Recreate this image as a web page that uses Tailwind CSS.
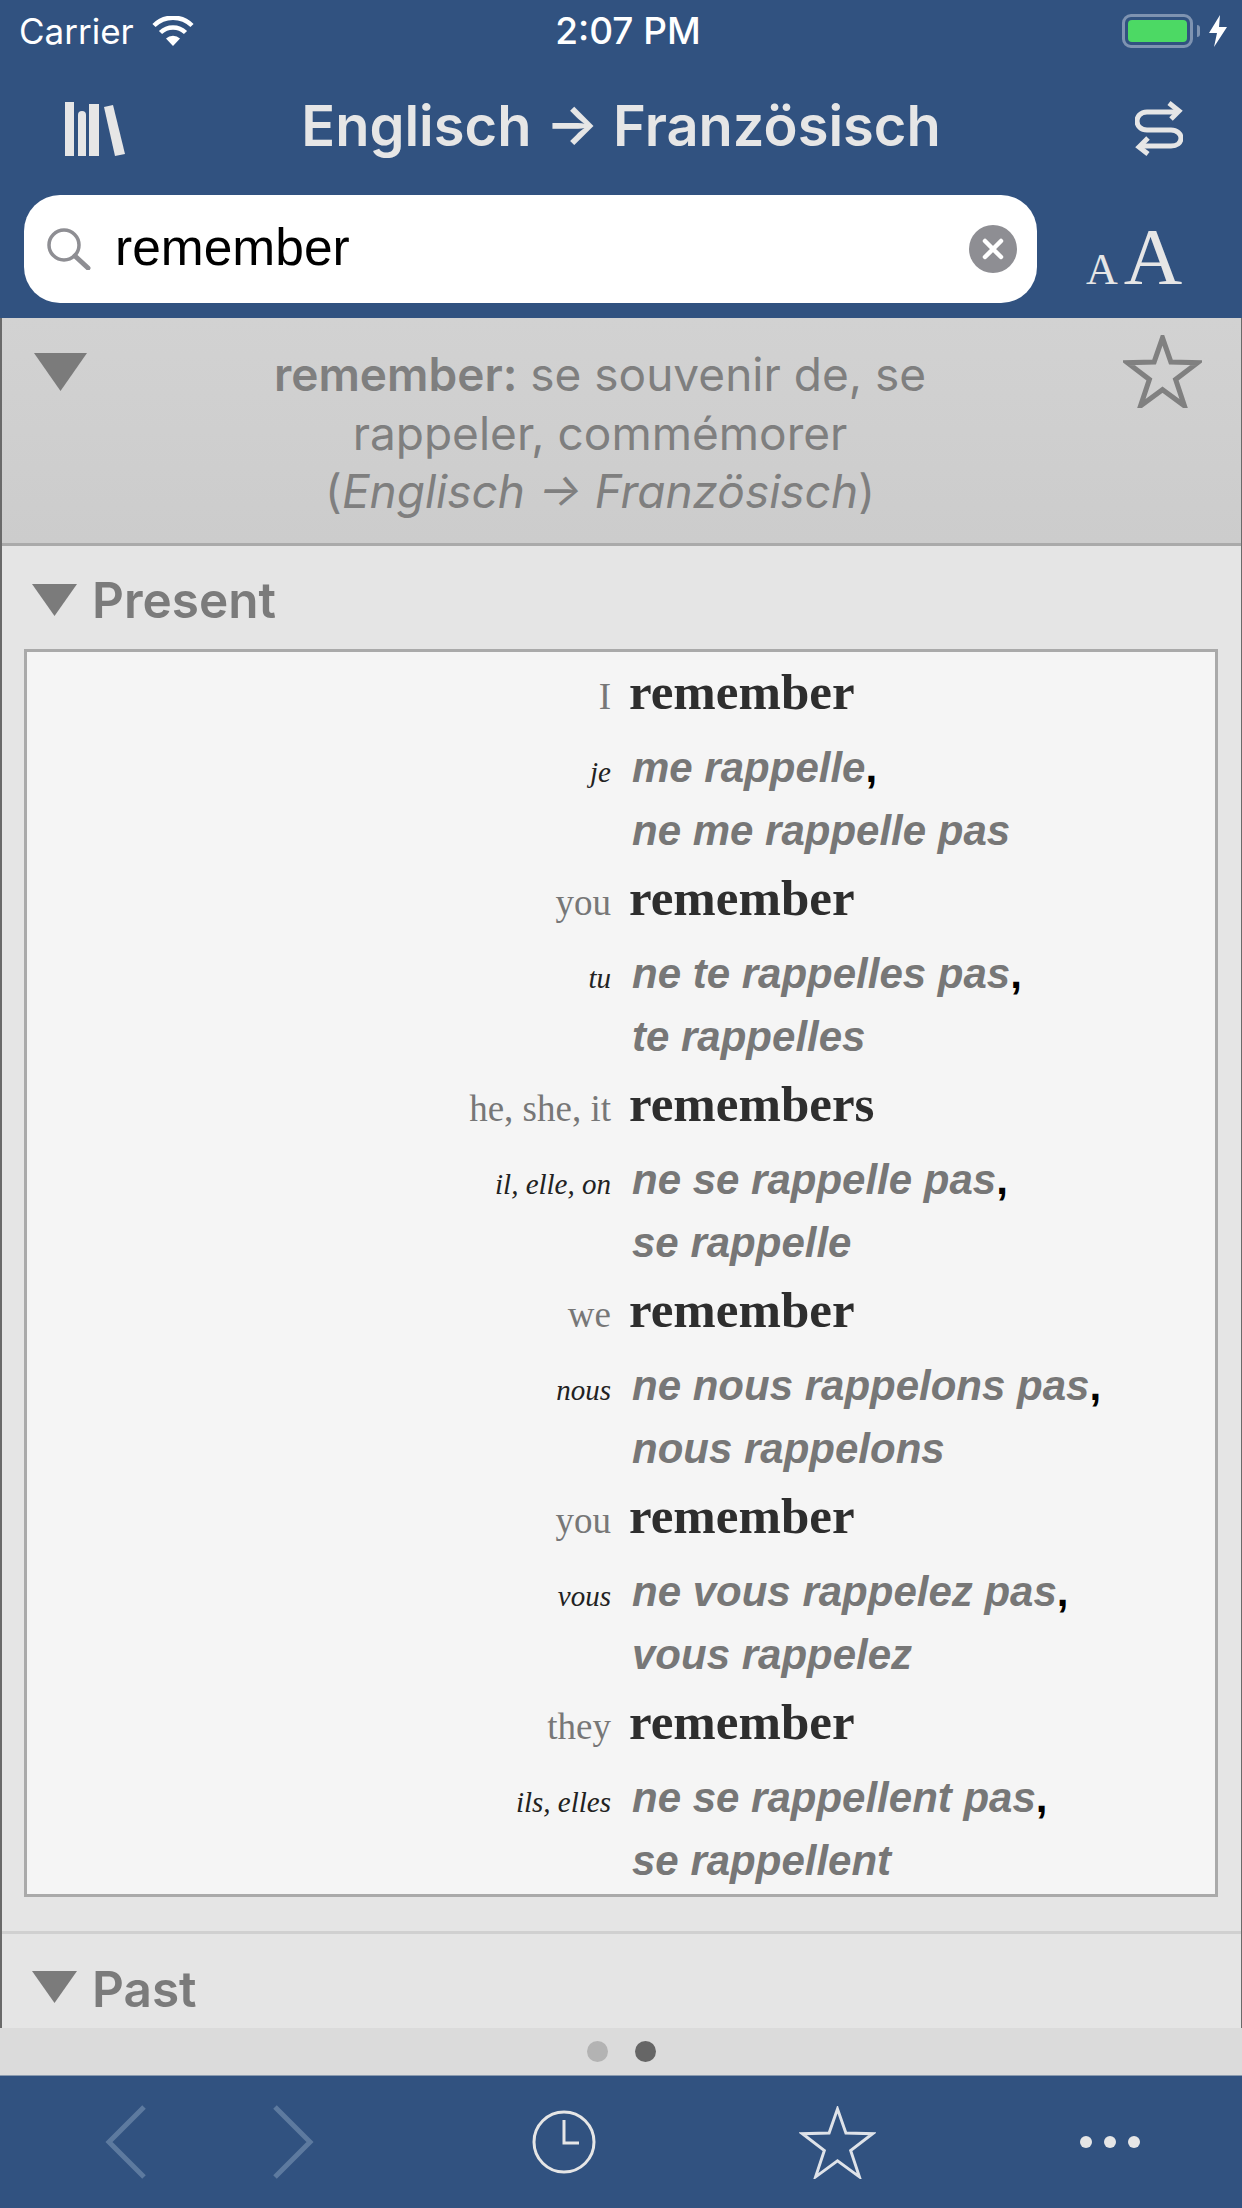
<!DOCTYPE html>
<html lang="en">
<head>
    <meta charset="UTF-8" />
    <title>Englisch - Französisch</title>
    <script src="https://cdn.jsdelivr.net/npm/@tailwindcss/browser@4"></script>
</head>
<body class="w-[1242px] h-[2208px] overflow-hidden flex flex-col bg-[#e5e5e5] font-['Inter',sans-serif]">

    <!-- Top bar -->
    <header class="h-[318px] flex-shrink-0 bg-[#315280] flex flex-col">
        <!-- Status bar -->
        <div class="h-[62px] grid grid-cols-[1fr_auto_1fr] items-center pl-[19px] pr-[15px] text-white text-[35px]">
            <div class="flex items-center gap-[18px]">
                <span>Carrier</span>
                <svg width="42" height="30" viewBox="0 0 42 30" fill="none" stroke="#fff" stroke-width="4.5"><path d="M21 30 L14 22.5 A10 10 0 0 1 28 22.5 Z" fill="#fff" stroke="none"/><path d="M8.5 16.5 A18 18 0 0 1 33.5 16.5"/><path d="M2 9.5 A27 27 0 0 1 40 9.5"/></svg>
            </div>
            <span class="font-medium text-[37px] ml-[10px]">2:07 PM</span>
            <div class="flex items-center justify-end">
                <div class="w-[71px] h-[34px] rounded-[9px] border-[3px] border-[#7e93b1] p-[3px]">
                    <div class="w-full h-full rounded-[4px] bg-[#4cd964]"></div>
                </div>
                <div class="w-[3px] h-[12px] ml-[4px] rounded-r-[3px] bg-[#7e93b1]"></div>
                <svg class="ml-[9px]" width="18" height="32" viewBox="0 0 18 32" fill="#fff"><polygon points="11,0 0,18 8,18 5,32 18,12 10,12"/></svg>
            </div>
        </div>

        <!-- Title row -->
        <div class="h-[133px] flex items-center text-[#e6e6e6]">
            <div class="w-[190px] pl-[65px]">
                <svg width="60" height="54" viewBox="0 0 60 54" fill="#e6e6e6"><rect x="0" y="0" width="9" height="54"/><path d="M13 13 a4 4 0 0 1 8 0 V54 H13 Z"/><rect x="24" y="2" width="10" height="52"/><polygon points="39,5 48,3 60,52 50,54"/></svg>
            </div>
            <h1 class="flex-grow text-center text-[56px] font-semibold whitespace-nowrap pb-[6px]">Englisch → Französisch</h1>
            <div class="w-[190px] pl-[83px]">
                <svg width="48" height="55" viewBox="0 0 48 55" fill="none" stroke="#e6e6e6" stroke-width="5"><path d="M43 11 H12 C5 11 2 16 2 20 C2 25 6 29 12 29 H36 C42 29 46 33 46 37 C46 42 42 45 36 45 H6"/><path d="M34 2 L44 10 L36 18"/><path d="M13 37 L4 46 L13 53"/></svg>
            </div>
        </div>

        <!-- Search row -->
        <div class="h-[108px] flex items-center pl-[24px]">
            <div class="w-[1013px] h-[108px] rounded-[36px] bg-white flex items-center pl-[23px] pr-[20px]">
                <svg width="44" height="42" viewBox="0 0 44 42" fill="none" stroke="#8e8e93" stroke-width="3.5"><circle cx="17" cy="17" r="15"/><path d="M28 28 L41 40" stroke-width="5" stroke-linecap="round"/></svg>
                <span class="ml-[24px] pb-[2px] flex-grow text-black text-[51.5px] font-['Liberation_Sans',sans-serif]">remember</span>
                <div class="w-[48px] h-[48px] rounded-full bg-[#8e8e93] flex items-center justify-center">
                    <svg width="24" height="24" viewBox="0 0 24 24" stroke="#fff" stroke-width="4.5" stroke-linecap="round"><path d="M4 4 L20 20 M20 4 L4 20"/></svg>
                </div>
            </div>
            <div class="ml-[49px] pt-[17px] flex items-baseline gap-[6px] text-[#e6e6e6] font-['Liberation_Serif',serif] leading-none">
                <span class="text-[44px]">A</span><span class="text-[81px]">A</span>
            </div>
        </div>
    </header>

    <main class="h-[1710px] flex-shrink-0 overflow-hidden border-l-2 border-r border-[#6a6a6a]">
        <!-- Entry header -->
        <section class="h-[228px] flex items-start border-b-[3px] border-[#aaaaaa] bg-gradient-to-b from-[#d2d2d2] to-[#cccccc] text-[#7f7f7f]">
            <div class="w-[85px] pl-[32px] pt-[35px] flex-shrink-0">
                <svg width="53" height="38" viewBox="0 0 53 38" fill="#7b7b7b"><polygon points="0,0 53,0 26.5,38"/></svg>
            </div>
            <p class="flex-grow text-center text-[46px] leading-[58.5px] pt-[27px] pr-[3px]">
                <b class="font-semibold">remember:</b> se souvenir de, se<br>rappeler, commémorer<br>(<i>Englisch → Französisch</i>)
            </p>
            <div class="w-[125px] pl-[7px] pt-[17px] flex-shrink-0">
                <svg width="79" height="73" viewBox="0 0 100 100" fill="none" stroke="#808080" stroke-width="7"><polygon points="50,4 61.5,37 98,38 68,61 80,97 50,75 20,97 32,61 2,38 38.5,37"/></svg>
            </div>
        </section>

        <!-- Present -->
        <section class="border-b-[3px] border-[#d0d0d0] pb-[34px]">
            <div class="h-[103px] flex items-center pl-[30px] pt-[4px] text-[#7b7b7b] text-[49.5px] font-semibold">
                <svg width="45" height="32" viewBox="0 0 45 32" fill="#7b7b7b"><polygon points="0,0 45,0 22.5,32"/></svg>
                <span class="ml-[15px] pt-[2px]">Present</span>
            </div>
            <div id="verb-table" class="mx-[22px] w-[1194px] h-[1248px] border-[3px] border-[#aaaaaa] bg-[#f5f5f5] pt-[5px]"></div>
        </section>

        <!-- Past -->
        <section class="h-[100px] pt-[36px] pl-[30px] flex items-start text-[#7b7b7b] text-[49.5px] font-semibold">
            <svg class="mt-[1px]" width="45" height="32" viewBox="0 0 45 32" fill="#7b7b7b"><polygon points="0,0 45,0 22.5,32"/></svg>
            <span class="ml-[15px] leading-[38px]">Past</span>
        </section>
    </main>

    <!-- Page dots -->
    <div class="h-[48px] flex-shrink-0 bg-[#dbdbdb] flex items-center justify-center gap-[27px] border-b border-[#8a9aae]">
        <span class="w-[21px] h-[21px] rounded-full bg-[#b3b3b3]"></span>
        <span class="w-[21px] h-[21px] rounded-full bg-[#666666]"></span>
    </div>

    <!-- Bottom toolbar -->
    <footer class="h-[132px] flex-shrink-0 bg-[#315280] flex items-center pl-[103px]">
        <svg width="44" height="74" viewBox="0 0 44 74" fill="none" stroke="#5d7a9f" stroke-width="5"><path d="M41 2 L6 37 L41 72"/></svg>
        <svg class="ml-[125px]" width="44" height="74" viewBox="0 0 44 74" fill="none" stroke="#5d7a9f" stroke-width="5"><path d="M3 2 L38 37 L3 72"/></svg>
        <svg class="ml-[216px]" width="64" height="64" viewBox="0 0 64 64" fill="none" stroke="#e6e6e6" stroke-width="3"><circle cx="32" cy="32" r="30"/><path d="M32 10 V33 H47"/></svg>
        <svg class="ml-[203px]" width="77" height="73" viewBox="0 0 100 100" fill="none" stroke="#dfe3e9" stroke-width="4"><polygon points="50,4 61.5,37 98,38 68,61 80,97 50,75 20,97 32,61 2,38 38.5,37"/></svg>
        <div class="ml-[204px] flex gap-[12px]">
            <span class="w-[12px] h-[12px] rounded-full bg-[#e6e6e6]"></span>
            <span class="w-[12px] h-[12px] rounded-full bg-[#e6e6e6]"></span>
            <span class="w-[12px] h-[12px] rounded-full bg-[#e6e6e6]"></span>
        </div>
    </footer>

    <script>
        const ROWS = [
            ['I', 'remember', 'je', 'me rappelle', 'ne me rappelle pas'],
            ['you', 'remember', 'tu', 'ne te rappelles pas', 'te rappelles'],
            ['he, she, it', 'remembers', 'il, elle, on', 'ne se rappelle pas', 'se rappelle'],
            ['we', 'remember', 'nous', 'ne nous rappelons pas', 'nous rappelons'],
            ['you', 'remember', 'vous', 'ne vous rappelez pas', 'vous rappelez'],
            ['they', 'remember', 'ils, elles', 'ne se rappellent pas', 'se rappellent'],
        ];

        function createRow([pronoun, verb, frPronoun, fr1, fr2]) {
            return `
                <div class="h-[206px] grid grid-cols-[584px_1fr] grid-rows-[80px_63px_63px] gap-x-[18px] items-baseline font-['Liberation_Serif',serif]">
                    <div class="leading-[70px] text-right text-[37px] text-[#777777]">${pronoun}</div>
                    <div class="leading-[70px] text-[51px] font-bold text-[#2e2e2e]">${verb}</div>
                    <div class="leading-[62px] text-right text-[29px] italic text-[#222222]">${frPronoun}</div>
                    <div class="leading-[62px] pl-[3px] text-[42px] font-bold italic text-[#777777] font-['Liberation_Sans',sans-serif]">${fr1}<span class="text-black not-italic">,</span></div>
                    <div></div>
                    <div class="leading-[62px] pl-[3px] text-[42px] font-bold italic text-[#777777] font-['Liberation_Sans',sans-serif]">${fr2}</div>
                </div>
            `;
        }

        document.getElementById('verb-table').innerHTML = ROWS.map(createRow).join('');
    </script>
</body>
</html>
